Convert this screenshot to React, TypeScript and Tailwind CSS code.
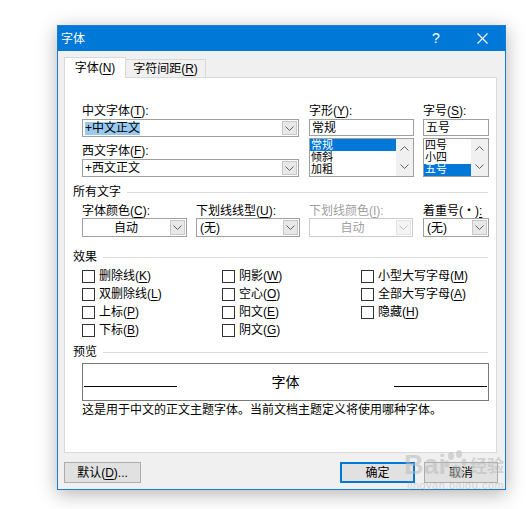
import type { ReactNode } from "react";

const FONT = "font-['Liberation_Sans','Noto_Sans_CJK_SC',sans-serif]";

function K({ children }: { children: ReactNode }) {
  return <span className="underline underline-offset-2">{children}</span>;
}

function Chevron({ up = false, color = "#606060" }: { up?: boolean; color?: string }) {
  return (
    <svg width="9" height="5" viewBox="0 0 9 5">
      <path
        d={up ? "M0.5 4.5 L4.5 0.5 L8.5 4.5" : "M0.5 0.5 L4.5 4.5 L8.5 0.5"}
        fill="none"
        stroke={color}
        strokeWidth="1"
      />
    </svg>
  );
}

function Combo({
  children,
  center = false,
  disabled = false,
  tall = false,
}: {
  children: ReactNode;
  center?: boolean;
  disabled?: boolean;
  tall?: boolean;
}) {
  return (
    <div
      className={
        "flex w-full border bg-white " +
        (tall ? "h-[19px] " : "h-[18px] ") +
        (disabled ? "border-[#cccccc] text-[#a0a0a0]" : "border-[#a0a0a0]")
      }
    >
      <div
        className={
          "flex flex-1 items-center overflow-hidden whitespace-nowrap leading-[14px] " +
          (center ? "justify-center" : "pl-[2px]")
        }
      >
        {children}
      </div>
      <div
        className={
          "m-[1px] flex w-[15px] items-center justify-center border " +
          (disabled
            ? "border-[#e3e3e3] bg-[#f4f4f4]"
            : "border-[#c8c8c8] bg-[#e8e8e8]")
        }
      >
        <Chevron color={disabled ? "#c0c0c0" : "#606060"} />
      </div>
    </div>
  );
}

function ListBox({ items, selected }: { items: string[]; selected: number }) {
  return (
    <div className="mt-[2px] flex h-[39px] w-full border border-[#a0a0a0] bg-white">
      <div className="flex-1 overflow-hidden">
        {items.map((item, i) => (
          <div
            key={item}
            className={
              "flex h-[12.3px] items-center pl-[1px] text-[11px] leading-[11px] whitespace-nowrap " +
              (i === selected ? "bg-[#0078d7] text-white" : "")
            }
          >
            {item}
          </div>
        ))}
      </div>
      <div className="flex w-[17px] flex-col items-center justify-between bg-[#f0f0f0] py-[7px]">
        <Chevron up color="#606060" />
        <Chevron color="#606060" />
      </div>
    </div>
  );
}

function TextBox({ children }: { children: ReactNode }) {
  return (
    <div className="flex h-[17px] w-full items-center border border-[#a0a0a0] bg-white pl-[2px] leading-[14px]">
      {children}
    </div>
  );
}

function Section({ title, className }: { title: string; className: string }) {
  return (
    <div className={"ml-[8px] flex h-[16px] w-[415px] items-center " + className}>
      <span className="leading-[16px]">{title}</span>
      <div className="ml-[6px] h-[1px] flex-1 bg-[#dcdcdc]" />
    </div>
  );
}

function Check({ children }: { children: ReactNode }) {
  return (
    <div className="flex h-[18px] items-center">
      <div className="h-[13px] w-[13px] border border-[#333333] bg-white" />
      <span className="ml-[4px] leading-[14px] whitespace-nowrap">{children}</span>
    </div>
  );
}

export default function App() {
  return (
    <div
      className={
        "relative h-[509px] w-[530px] overflow-hidden bg-white pl-[57px] pt-[25px] text-[12px] text-black " +
        FONT
      }
    >
      <div className="flex h-[465px] w-[449px] flex-col border border-[#1a7fd4] bg-[#f0f0f0] shadow-[0_4px_18px_rgba(0,0,0,0.3)]">
        {/* title bar */}
        <div className="flex h-[25px] items-center bg-[#0078d7] text-white">
          <span className="pl-[3px] leading-[14px]">字体</span>
          <div className="ml-auto flex h-full w-[46px] items-center justify-center text-[14px]">
            ?
          </div>
          <div className="flex h-full w-[46px] items-center justify-center">
            <svg width="11" height="11" viewBox="0 0 11 11">
              <path d="M0.5 0.5 L10.5 10.5 M10.5 0.5 L0.5 10.5" stroke="white" strokeWidth="1.1" />
            </svg>
          </div>
        </div>

        {/* tabs */}
        <div className="ml-[6px] mt-[6px] flex h-[20px] items-end">
          <div className="relative z-10 -mb-[1px] flex h-[21px] w-[62px] items-center justify-center border border-b-0 border-[#d9d9d9] bg-white leading-[14px]">
            字体(<K>N</K>)
          </div>
          <div className="flex h-[18px] w-[80px] items-center justify-center border border-b-0 border-l-0 border-[#d9d9d9] bg-[#f0f0f0] leading-[14px]">
            字符间距(<K>R</K>)
          </div>
        </div>

        {/* panel */}
        <div className="ml-[6px] h-[376px] w-[433px] border border-[#d9d9d9] bg-white">
          <div className="flex pl-[17px] pt-[25px]">
            <div className="w-[217px]">
              <div className="h-[16px] leading-[16px]">
                中文字体(<K>T</K>):
              </div>
              <Combo>
                <span className="bg-[#99c9ef] leading-[13px]">+中文正文</span>
              </Combo>
              <div className="mt-[6px] h-[16px] leading-[16px]">
                西文字体(<K>F</K>):
              </div>
              <Combo>+西文正文</Combo>
            </div>
            <div className="ml-[10px] w-[105px]">
              <div className="h-[16px] leading-[16px]">
                字形(<K>Y</K>):
              </div>
              <TextBox>常规</TextBox>
              <ListBox items={["常规", "倾斜", "加粗"]} selected={0} />
            </div>
            <div className="ml-[9px] w-[66px]">
              <div className="h-[16px] leading-[16px]">
                字号(<K>S</K>):
              </div>
              <TextBox>五号</TextBox>
              <ListBox items={["四号", "小四", "五号"]} selected={2} />
            </div>
          </div>

          <Section title="所有文字" className="mt-[7px]" />

          <div className="mt-[4px] flex pl-[17px]">
            <div className="w-[105px]">
              <div className="h-[14px] leading-[14px]">
                字体颜色(<K>C</K>):
              </div>
              <Combo center tall>
                自动
              </Combo>
            </div>
            <div className="ml-[9px] w-[104px]">
              <div className="h-[14px] leading-[14px] whitespace-nowrap">
                下划线线型(<K>U</K>):
              </div>
              <Combo tall>
                <span className="pl-[1px]">(无)</span>
              </Combo>
            </div>
            <div className="ml-[9px] w-[104px]">
              <div className="h-[14px] leading-[14px] whitespace-nowrap text-[#a0a0a0]">
                下划线颜色(<K>I</K>):
              </div>
              <Combo center disabled tall>
                自动
              </Combo>
            </div>
            <div className="ml-[10px] w-[66px]">
              <div className="h-[14px] overflow-hidden leading-[14px] whitespace-nowrap">
                着重号(・)<K>:</K>
              </div>
              <Combo tall>
                <span className="pl-[1px]">(无)</span>
              </Combo>
            </div>
          </div>

          <Section title="效果" className="mt-[12px]" />

          <div className="mt-[2px] grid grid-cols-[140px_139px_auto] pl-[17px]">
            <Check>删除线(<K>K</K>)</Check>
            <Check>阴影(<K>W</K>)</Check>
            <Check>小型大写字母(<K>M</K>)</Check>
            <Check>双删除线(<K>L</K>)</Check>
            <Check>空心(<K>O</K>)</Check>
            <Check>全部大写字母(<K>A</K>)</Check>
            <Check>上标(<K>P</K>)</Check>
            <Check>阳文(<K>E</K>)</Check>
            <Check>隐藏(<K>H</K>)</Check>
            <Check>下标(<K>B</K>)</Check>
            <Check>阴文(<K>G</K>)</Check>
            <div />
          </div>

          <Section title="预览" className="mt-[5px]" />

          <div className="ml-[17px] mt-[3px] flex h-[38px] w-[407px] items-start border border-[#7a7a7a]">
            <div className="ml-[1px] mt-[22px] h-[1px] w-[93px] bg-black" />
            <div className="mt-[9px] flex-1 text-center text-[14px] leading-[18px]">字体</div>
            <div className="mr-[1px] mt-[22px] h-[1px] w-[93px] bg-black" />
          </div>
          <div className="ml-[17px] mt-[1px] leading-[16px] whitespace-nowrap">
            这是用于中文的正文主题字体。当前文档主题定义将使用哪种字体。
          </div>
        </div>

        {/* buttons */}
        <div className="ml-[6px] mr-[7px] mt-[9px] flex">
          <div className="flex h-[21px] w-[77px] items-center justify-center border border-[#adadad] bg-[#e1e1e1] leading-[14px]">
            默认(<K>D</K>)...
          </div>
          <div className="ml-auto flex h-[21px] w-[75px] items-center justify-center border-2 border-[#0078d7] bg-[#e1e1e1] leading-[14px]">
            确定
          </div>
          <div className="ml-[9px] flex h-[21px] w-[74px] items-center justify-center border border-[#adadad] bg-[#e1e1e1] leading-[14px]">
            取消
          </div>
        </div>
      </div>

      {/* watermark */}
      <div className="pointer-events-none absolute left-[404px] top-[450px] text-[rgba(185,185,185,0.55)]">
        <div className="flex items-end">
          <span className="text-[27px] font-bold leading-[30px] font-['Liberation_Sans',sans-serif]">Bai</span>
          <svg width="26" height="30" viewBox="0 0 26 30" className="-ml-[2px]">
            <g fill="rgba(185,185,185,0.55)">
              <ellipse cx="7" cy="6" rx="3" ry="4" />
              <ellipse cx="15" cy="4" rx="3" ry="4" />
              <ellipse cx="3" cy="14" rx="2.5" ry="3.5" />
              <ellipse cx="20" cy="12" rx="2.5" ry="3.5" />
              <path d="M5 26 C4 20 9 15 12 15 C16 15 20 20 19 26 C17 29 7 29 5 26 Z" />
            </g>
          </svg>
          <span className="mb-[3px] text-[17px] font-bold leading-[20px]">经验</span>
        </div>
        <div className="ml-[3px] -mt-[1px] text-[11px] leading-[12px] tracking-[0.5px] font-['Liberation_Sans',sans-serif]">
          jingyan.baidu.com
        </div>
      </div>
    </div>
  );
}
